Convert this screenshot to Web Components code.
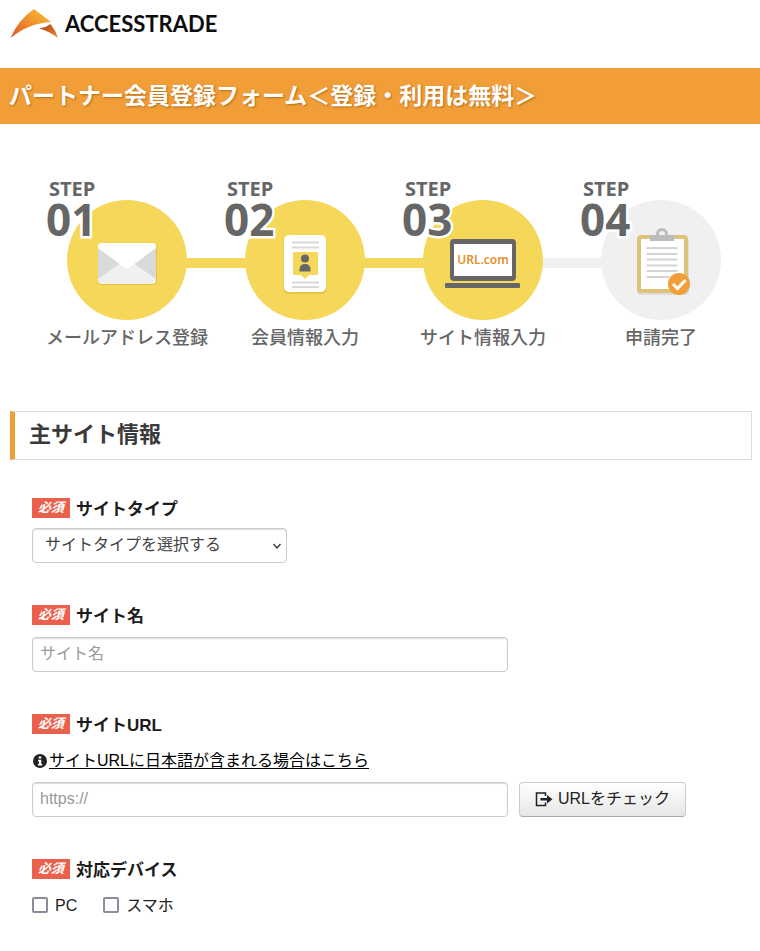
<!DOCTYPE html>
<html lang="ja">
<head>
<meta charset="utf-8">
<meta name="viewport" content="width=device-width, initial-scale=1">
<title>パートナー会員登録フォーム</title>
<style>
  body {
    margin: 0;
    background: #fff;
    color: #222;
    font: 16px/24px "Liberation Sans", "Noto Sans CJK JP", sans-serif;
    --orange: #f19e38;
    --yellow: #f5d859;
    --grey: #f0f0f0;
  }
</style>
</head>
<body>
<site-header></site-header>
<page-banner>パートナー会員登録フォーム＜登録・利用は無料＞</page-banner>
<main>
  <step-list>
    <step-item number="01" after="yellow">
      メールアドレス登録
      <svg slot="icon" viewBox="0 0 120 120" aria-hidden="true">
        <rect x="31" y="44" width="59" height="41" rx="4" fill="#d9b93e" opacity=".6"/>
        <rect x="31" y="43" width="58" height="41" rx="4" fill="#f0f0f0"/>
        <path d="M31 48 53 63.500 31 79zM89 48 67 63.500 89 79z" fill="#d9d9d9"/>
        <path d="M35 43h50q4 0 4 4v1L62 68q-2 1.500-4 0L31 48v-1q0-4 4-4z" fill="#fff"/>
      </svg>
    </step-item>
    <step-item number="02" before="yellow" after="yellow">
      会員情報入力
      <svg slot="icon" viewBox="0 0 120 120" aria-hidden="true">
        <rect x="38.500" y="36" width="43" height="58" rx="5" fill="#d9b93e" opacity=".6"/>
        <rect x="39" y="35" width="42" height="57" rx="5" fill="#fff"/>
        <path d="M47 42.500h27M47 47.500h27M47 82.500h27M47 87h27" stroke="#d8d8d8" stroke-width="2"/>
        <path d="M49 52h23q1 0 1 1v21q0 1-1 1h-8l-4 4-4-4h-7q-1 0-1-1V53q0-1 1-1z" fill="#f5d859"/>
        <circle cx="60" cy="58.500" r="4" fill="#666"/>
        <path d="M54.500 71.500v-2q0-5.500 5.500-5.500t5.500 5.500v2z" fill="#666"/>
      </svg>
    </step-item>
    <step-item number="03" before="yellow" after="grey">
      サイト情報入力
      <svg slot="icon" viewBox="0 0 120 120" aria-hidden="true">
        <rect x="27" y="39" width="66" height="42" rx="4" fill="#666"/>
        <rect x="31" y="44" width="58" height="32" fill="#fff"/>
        <rect x="22" y="83" width="75" height="5" rx="1" fill="#666"/>
        <text x="60" y="64" text-anchor="middle" font-family="Noto Sans, sans-serif" font-size="12" font-weight="600" fill="#e58f2c">URL.com</text>
      </svg>
    </step-item>
    <step-item number="04" before="grey" disc="grey">
      申請完了
      <svg slot="icon" viewBox="0 0 120 120" aria-hidden="true">
        <rect x="36" y="37" width="52" height="58" rx="4" fill="#ddd"/>
        <rect x="36" y="35" width="51" height="58" rx="4" fill="#dcc27a"/>
        <rect x="40" y="39" width="43" height="50" fill="#fff"/>
        <circle cx="61" cy="34" r="4.500" fill="none" stroke="#bcbcbc" stroke-width="3"/>
        <path d="M49 35h24v6H49z" fill="#bcbcbc"/>
        <path d="M45.500 48h31M45.500 54h31M45.500 59.500h31M45.500 65.500h31M45.500 71h31M45.500 77h23" stroke="#d4d4d4" stroke-width="2"/>
        <circle cx="78" cy="84" r="11" fill="#f19e38"/>
        <path d="m72 84 4.500 4.500 8-8.500" fill="none" stroke="#fff" stroke-width="3"/>
      </svg>
    </step-item>
  </step-list>
  <section-title>主サイト情報</section-title>
  <field-stack>
    <select-field label="サイトタイプ" option="サイトタイプを選択する"></select-field>
    <text-field label="サイト名" placeholder="サイト名"></text-field>
    <url-field label="サイトURL" placeholder="https://" hint="サイトURLに日本語が含まれる場合はこちら" action="URLをチェック"></url-field>
    <device-field label="対応デバイス" options="PC,スマホ"></device-field>
  </field-stack>
</main>

<script>
  const define = (name, render) => customElements.define(name, class extends HTMLElement {
    constructor() {
      super();
      this.attachShadow({ mode: "open" });
    }
    connectedCallback() {
      this.shadowRoot.innerHTML = render(this);
    }
  });

  define("site-header", () => `
    <style>
      :host { display: block; }
      header { display: flex; align-items: center; padding: 8px 10px 28px; }
      a { display: flex; align-items: center; gap: 7px; color: #0d0d0d; text-decoration: none; }
      svg { width: 48px; height: 32px; }
      span { font: 700 22px/32px Lato, sans-serif; }
    </style>
    <header><a href="#">
      <svg viewBox="0 0 48 32" aria-hidden="true">
        <defs>
          <linearGradient id="wing" x1="1" y1="0" x2="0" y2="1">
            <stop offset="0" stop-color="#fbc239"/><stop offset=".55" stop-color="#ec8a2c"/><stop offset="1" stop-color="#dc5424"/>
          </linearGradient>
          <linearGradient id="tail" x1="0" y1="0" x2="1" y2="1">
            <stop offset="0" stop-color="#a83f12"/><stop offset="1" stop-color="#f08a32"/>
          </linearGradient>
        </defs>
        <path d="M.5 30Q8 12 24 1l17 13Q19 15 .5 30z" fill="url(#wing)"/>
        <path d="M29 20.500q7-1 11.500-4.500 5 6 7.500 14-9-7-19-9.500z" fill="url(#tail)"/>
      </svg>
      <span>ACCESSTRADE</span>
    </a></header>`);

  define("page-banner", () => `
    <style>
      :host { display: block; background: var(--orange); }
      h1 { margin: 0; padding: 11px 9px; font-size: 23px; line-height: 34px; color: #fff; text-shadow: 1px 1px 2px #b56c15; }
    </style>
    <h1><slot></slot></h1>`);

  define("step-list", () => `
    <style>
      :host { display: grid; grid-template-columns: repeat(4, 1fr); padding: 56px 10px 0 38px; }
    </style>
    <slot></slot>`);

  define("step-item", el => {
    const tone = name => el.hasAttribute(name) ? `var(--${el.getAttribute(name)})` : "transparent";
    const disc = `var(--${el.getAttribute("disc") || "yellow"})`;
    return `
    <style>
      :host { display: block; color: #666; text-align: center; }
      .figure { display: grid; }
      .figure > * { grid-area: 1 / 1; }
      .line { align-self: end; height: 10px; margin-bottom: 52px;
        background: linear-gradient(90deg, ${tone("before")} 50%, ${tone("after")} 50%); }
      .disc { justify-self: center; width: 120px; height: 120px; margin-top: 20px; border-radius: 50%; background: ${disc}; }
      .number { justify-self: start; margin-left: 8px; text-align: left; font-family: "Open Sans", "Noto Sans", sans-serif; font-weight: 700;
        -webkit-text-stroke: 5px #fff; paint-order: stroke fill; }
      .step { display: block; padding-left: 3px; font-size: 20px; line-height: 18px; }
      .digits { display: block; font-size: 44px; line-height: 42px; }
      .caption { font-weight: 500; font-size: 18px; line-height: 26px; padding-top: 5px; white-space: nowrap; }
    </style>
    <div class="figure">
      <div class="line"></div>
      <div class="disc"><slot name="icon"></slot></div>
      <div class="number"><span class="step">STEP</span><span class="digits">${el.getAttribute("number")}</span></div>
    </div>
    <div class="caption"><slot></slot></div>`;
  });

  define("section-title", () => `
    <style>
      :host { display: block; margin: 60px 8px 0 10px; border: 1px solid #ddd; border-left: 5px solid var(--orange); }
      h2 { margin: 0; padding: 7px 14px 8px; font-size: 22px; line-height: 32px; color: #3a3a3a; }
    </style>
    <h2><slot></slot></h2>`);

  define("field-stack", () => `
    <style>:host { display: flex; flex-direction: column; gap: 42px; padding: 38px 32px 36px; }</style>
    <slot></slot>`);

  define("required-badge", () => `
    <style>
      :host { display: block; width: 38px; background: #eb604d; color: #fff; text-align: center; font-size: 13px; line-height: 20px; font-style: italic; font-weight: 700; }
    </style>
    <slot>必須</slot>`);

  const fieldStyle = `
    :host { display: block; }
    .head { display: flex; align-items: flex-start; gap: 6px; height: 24px; padding: 0; font-size: 17px; line-height: 24px; font-weight: 700; color: #1c1c1c; }
    input, select, button { box-sizing: border-box; margin: 0; font: inherit; }
    .box { height: 35px; border: 1px solid #ccc; border-radius: 4px; background: #fff; color: #444; box-shadow: inset 0 1px 1px #ddd; }
    input.box { display: block; width: 100%; max-width: 476px; padding: 0 7px 2px; }
    input::placeholder { color: #999; opacity: 1; }`;
  const head = el => `<div class="head"><required-badge></required-badge><label for="control">${el.getAttribute("label")}</label></div>`;

  define("select-field", el => `
    <style>${fieldStyle}
      .wrap { display: grid; max-width: 255px; margin-top: 6px; align-items: center; }
      .wrap > * { grid-area: 1 / 1; }
      select { appearance: none; width: 100%; padding: 0 28px 2px 12px; }
      svg { justify-self: end; width: 8px; height: 6px; margin-right: 6px; pointer-events: none; }
    </style>
    ${head(el)}
    <div class="wrap">
      <select id="control" class="box"><option>${el.getAttribute("option")}</option></select>
      <svg viewBox="0 0 8 6" aria-hidden="true"><path d="m.5 1 3.500 4 3.500-4" fill="none" stroke="#333" stroke-width="1.300"/></svg>
    </div>`);

  define("text-field", el => `
    <style>${fieldStyle}
      input.box { margin-top: 8px; }
    </style>
    ${head(el)}
    <input id="control" class="box" type="text" placeholder="${el.getAttribute("placeholder")}">`);

  define("url-field", el => `
    <style>${fieldStyle}
      .hint { display: flex; align-items: center; gap: 1px; margin: 11px 0 9px; }
      .hint svg { width: 16px; height: 16px; }
      a { color: #000; text-underline-offset: 2px; }
      .row { display: flex; gap: 11px; }
      input.box { flex: 0 1 476px; min-width: 0; }
      button { display: flex; align-items: center; justify-content: center; gap: 5px; flex: none; height: 35px; padding: 0 15px 2px; border: 1px solid #ccc; border-bottom-color: #aaa; border-radius: 4px; background: linear-gradient(#fff, #e6e6e6); color: #222; }
      button svg { width: 18px; height: 16px; }
    </style>
    ${head(el)}
    <div class="hint">
      <svg viewBox="0 0 16 16" aria-hidden="true"><circle cx="8" cy="8" r="7" fill="#222"/><path d="M6.700 3.500h2.600v2H6.700zM6 6.700h3.300v4.200h1V12.500H5.900v-1.600h1V8.200H6z" fill="#fff"/></svg>
      <a href="#">${el.getAttribute("hint")}</a>
    </div>
    <div class="row">
      <input id="control" class="box" type="url" placeholder="${el.getAttribute("placeholder")}">
      <button type="button">
        <svg viewBox="0 0 18 16" aria-hidden="true"><path d="M10.500 5V2H1.500v12.500h9V11.500" fill="none" stroke="#222" stroke-width="1.500"/><path d="M5.500 7H12V4l5.500 4.200L12 12.500v-3H5.500z" fill="#222"/></svg>
        ${el.getAttribute("action")}
      </button>
    </div>`);

  define("device-field", el => `
    <style>${fieldStyle}
      fieldset { margin: 0; padding: 0; border: 0; min-width: 0; }
      .choices { display: flex; gap: 26px; padding-top: 11px; }
      .choices label { display: flex; align-items: center; gap: 7px; }
      input { appearance: none; width: 16px; height: 16px; margin-bottom: 3px; border: 2px solid #8f8b9c; border-radius: 2px; background: #fff; }
      input:checked { background: var(--orange); }
    </style>
    <fieldset>
      <legend class="head"><required-badge></required-badge>${el.getAttribute("label")}</legend>
      <div class="choices">
        ${el.getAttribute("options").split(",").map(name => `<label><input type="checkbox" name="device" value="${name}">${name}</label>`).join("")}
      </div>
    </fieldset>`);
</script>
</body>
</html>
